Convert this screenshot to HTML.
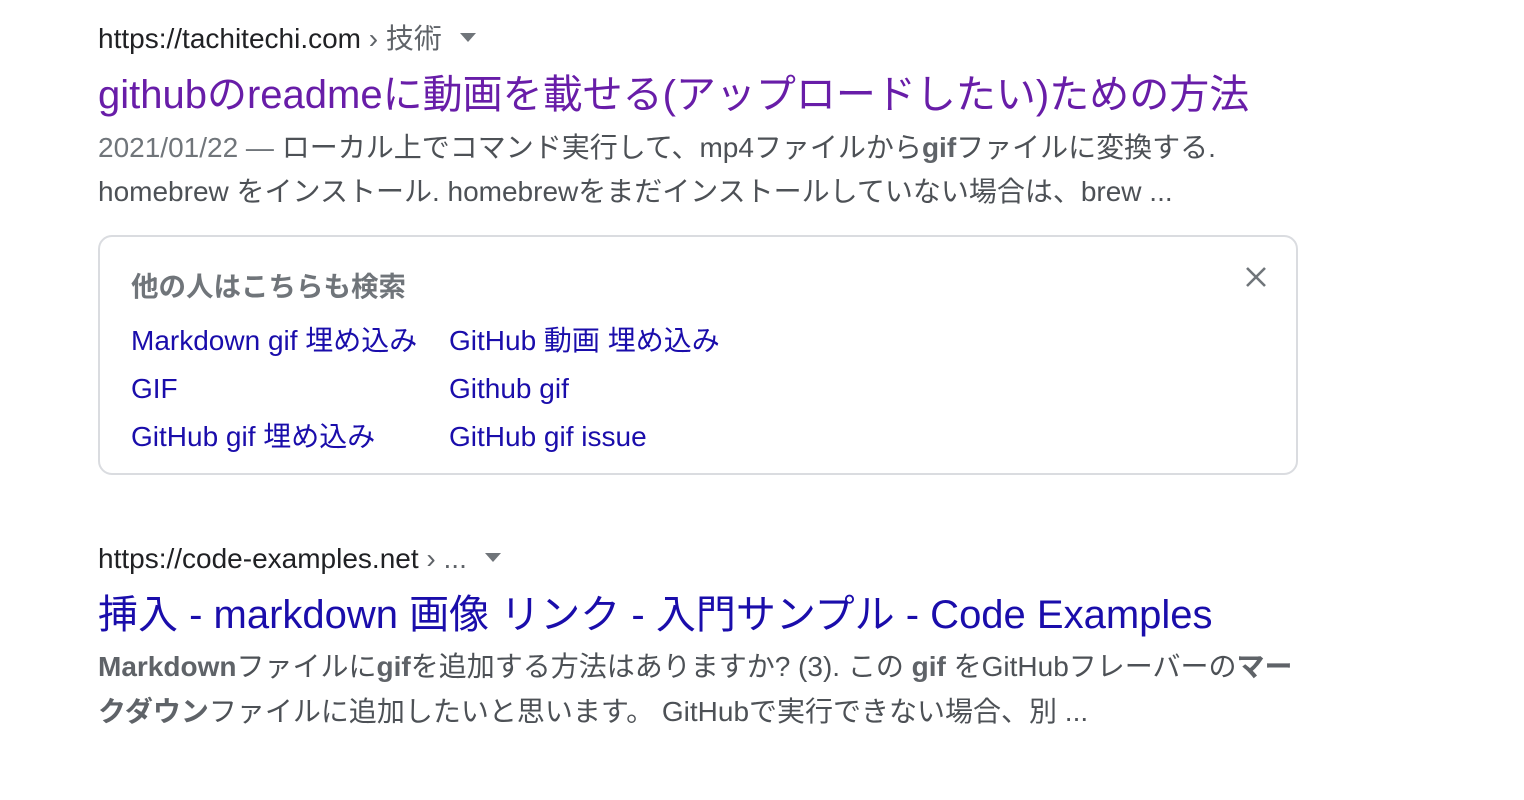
<!DOCTYPE html>
<html><head><meta charset="utf-8"><style>
body{margin:0;width:1524px;height:800px;background:#fff;font-family:"Liberation Sans","Noto Sans CJK JP",sans-serif;position:relative;overflow:hidden}
.a{position:absolute;white-space:nowrap;line-height:1}
.url{font-size:28px;color:#202124}
.url span{color:#5f6368}
.tri{display:inline-block;width:0;height:0;border-left:8px solid transparent;border-right:8px solid transparent;border-top:9px solid #70757a;vertical-align:middle;margin-left:18px;position:relative;top:-3px}
.t{font-size:40px}
.s{font-size:28px;color:#4d5156}
.s b{color:#5f6368}
.box{position:absolute;left:98px;top:235px;width:1196px;height:236px;border:2px solid #dadce0;border-radius:14px}
.h{font-size:27.5px;color:#70757a;font-weight:bold}
.l{font-size:28px;color:#1a0dab}
</style></head><body>
<div class="a url" style="left:98px;top:25px">https://tachitechi.com <span>› 技術</span><i class="tri"></i></div>
<div class="a t" style="left:98px;top:75px;color:#681da8">githubのreadmeに動画を載せる(アップロードしたい)ための方法</div>
<div class="a s" style="left:98px;top:134px"><span style="color:#70757a">2021/01/22 — </span>ローカル上でコマンド実行して、mp4ファイルから<b>gif</b>ファイルに変換する.</div>
<div class="a s" style="left:98px;top:178px">homebrew をインストール. homebrewをまだインストールしていない場合は、brew ...</div>
<div class="box"></div>
<div class="a h" style="left:131px;top:273px">他の人はこちらも検索</div>
<svg class="a" style="left:1245px;top:266px" width="22" height="22" viewBox="0 0 22 22"><path d="M2 2L20 20M20 2L2 20" stroke="#70757a" stroke-width="2.6"/></svg>
<div class="a l" style="left:131px;top:327px">Markdown gif 埋め込み</div>
<div class="a l" style="left:449px;top:327px">GitHub 動画 埋め込み</div>
<div class="a l" style="left:131px;top:375px">GIF</div>
<div class="a l" style="left:449px;top:375px">Github gif</div>
<div class="a l" style="left:131px;top:423px">GitHub gif 埋め込み</div>
<div class="a l" style="left:449px;top:423px">GitHub gif issue</div>
<div class="a url" style="left:98px;top:545px">https://code-examples.net <span>› ...</span><i class="tri"></i></div>
<div class="a t" style="left:98px;top:595px;color:#1a0dab">挿入 - markdown 画像 リンク - 入門サンプル - Code Examples</div>
<div class="a s" style="left:98px;top:653px"><b>Markdown</b>ファイルに<b>gif</b>を追加する方法はありますか? (3). この <b>gif</b> をGitHubフレーバーの<b>マー</b></div>
<div class="a s" style="left:98px;top:698px"><b>クダウン</b>ファイルに追加したいと思います。 GitHubで実行できない場合、別 ...</div>
</body></html>
